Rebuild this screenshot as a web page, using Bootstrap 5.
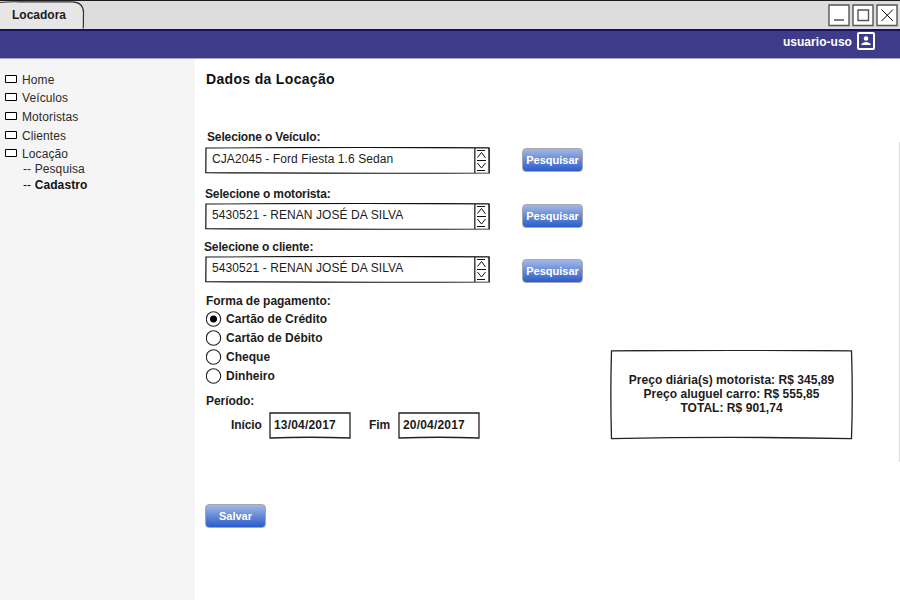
<!DOCTYPE html>
<html lang="pt-BR">
<head>
<meta charset="utf-8">
<meta name="viewport" content="width=device-width, initial-scale=1">
<title>Locadora</title>
<link href="https://cdn.jsdelivr.net/npm/bootstrap@5.3.0/dist/css/bootstrap.min.css" rel="stylesheet">
<style>
body{font-family:"Liberation Sans",Arial,sans-serif;font-size:12px;line-height:18px;color:#1c1c1c;background:#fff;height:600px;overflow:hidden}
svg{display:block;flex:none}
.titlebar{height:29px;background:#ddd;border-top:1px solid #1c1a1c}
.tab-title{width:84px;height:28px;padding:5px 0 0 12px;letter-spacing:0}
.frame{position:absolute;left:0;top:0;z-index:0}
.over{position:relative;z-index:1}
.userbar{height:30px;background:#3e3c88;border-top:2px solid #14125c;border-bottom:1px solid #a9a8cc;padding-right:25px;color:#fff;line-height:22px}
.user-name{margin-right:5px;letter-spacing:.04px}
.side{width:195px;background:#f5f5f5;padding:12px 0 0 5px}
.side a{color:#2b2b2b;text-decoration:none;height:18px;gap:5px;letter-spacing:.1px}
.side a svg{margin-top:-2px}
.side a.last-item{height:17px}
.side .sub-item{height:16px;line-height:16px;padding-left:18px}
.side .current{color:#111}
.gap-1px{margin-top:1px}
.form-col{width:406px;padding:11px 0 0 10px}
.heading{font-size:14px;line-height:18px;margin:0 0 40px 1px;letter-spacing:.33px;color:#111}
.lbl{height:18px;font-weight:700;letter-spacing:-.14px}
.lbl-vehicle{padding-left:2px}
.lbl-driver{margin-top:12px}
.lbl-client{margin:9px 0 0 -1px}
.lbl-pay{margin-top:10px;padding-left:1px;letter-spacing:-.03px}
.lbl-period{margin-top:7px;padding-left:1px;letter-spacing:-.05px}
.pick-row{padding-right:18px}
.pick{width:285px;height:26px;padding:3px 0 0 7px;letter-spacing:.08px}
.blue-btn{width:61px;height:24px;padding:1px 0 0;border:1px solid #a7a7ab;border-radius:4px;background:linear-gradient(#a3b8e6,#2a5cc9);color:#fff;font-size:11px;font-weight:700;line-height:21px}
.client-btn{margin-top:3px;margin-bottom:-1px}
.opts{margin-top:-1px}
.opt{height:19px;gap:4px;font-weight:700;letter-spacing:.03px}
.dates{margin:2px 0 65px 26px;font-weight:700}
.from-lbl{width:38px;letter-spacing:-.1px}
.to-lbl{width:29px;margin-left:18px;letter-spacing:-.1px}
.date{width:82px;height:27px;padding:4px 0 0 5px;letter-spacing:.18px}
.total{width:243px;height:90px;margin:291px 0 0 9px;padding-top:23px;line-height:14px;font-weight:700;text-align:center;letter-spacing:.04px}
.edge{position:absolute;right:0;top:142px}
</style>
</head>
<body class="d-flex flex-column">
<svg width="0" height="0" class="position-absolute">
  <defs>
    <symbol id="pick-frame" viewBox="0 0 285 27">
      <path d="M1 1Q140 .1 284 .8L284.300 26Q140 26.600 .8 25.600Z" fill="#fff" stroke="#111" stroke-width="1.2"/>
      <path d="M269.800 1V26M284.200 1V26" fill="none" stroke="#333" stroke-width="1.4"/>
      <path d="M272 3.500H280M272 13.500H281M272 23.500H280M272.500 10.500L276.500 5.500L280.500 11M272.500 16L276.500 21L280.500 16" fill="none" stroke="#111"/>
    </symbol>
    <symbol id="date-frame" viewBox="0 0 82 27">
      <path d="M1 1H81V26Q40 24.500 1 26Z" fill="#fff" stroke="#222" stroke-width="1.3"/>
    </symbol>
    <symbol id="menu-box" viewBox="0 0 12 8"><path d="M.5.5H11.500V7.500H.5Z" fill="#fff" stroke="#000"/></symbol>
    <symbol id="ring" viewBox="0 0 16 16"><circle cx="7.500" cy="8" r="7.200" fill="#fff" stroke="#222" stroke-width="1.1"/></symbol>
  </defs>
</svg>

<header class="titlebar d-flex justify-content-between">
  <div class="tab-title position-relative fw-bold">
    <svg class="frame" width="86" height="28"><path d="M0 1.500Q8 .5 20 .8H72Q83 1 83.500 11L83.300 27.500H0Z" fill="#e6e6e6"/><path d="M0 1.500Q8 .5 20 .8H72Q83 1 83.500 11L83.300 27.500" fill="none" stroke="#333" stroke-width="1.2"/></svg>
    <span class="over">Locadora</span>
  </div>
  <svg width="72" height="27" fill="#fff" stroke="#555" stroke-width="1.4"><path d="M1 4H21V24.500H1ZM25 4H45V24.500H25ZM49 4H69V24.500H49Z"/><path d="M6 19H16M30 9H40.500V19.500H30Z"/><path d="M53.500 8.500L65 20M65 8.500L53.500 20" stroke="#000" stroke-width="1"/></svg>
</header>

<div class="userbar d-flex justify-content-end fw-bold">
  <span class="user-name">usuario-uso</span>
  <svg width="18" height="20"><rect x="1" y="2" width="16" height="16" rx="1" fill="none" stroke="#fff" stroke-width="2"/><circle cx="9" cy="7.500" r="2.300" fill="#fff"/><path d="M4.500 14V12.700Q9 9.300 13.500 12.700V14Z" fill="#fff"/></svg>
</div>

<div class="d-flex flex-grow-1">
  <nav class="side d-flex flex-column">
    <a href="#" class="d-flex align-items-center"><svg width="12" height="8"><use href="#menu-box"/></svg>Home</a>
    <a href="#" class="d-flex align-items-center"><svg width="12" height="8"><use href="#menu-box"/></svg>Veículos</a>
    <a href="#" class="d-flex align-items-center gap-1px"><svg width="12" height="8"><use href="#menu-box"/></svg>Motoristas</a>
    <a href="#" class="d-flex align-items-center gap-1px"><svg width="12" height="8"><use href="#menu-box"/></svg>Clientes</a>
    <a href="#" class="d-flex align-items-center last-item"><svg width="12" height="8"><use href="#menu-box"/></svg>Locação</a>
    <a href="#" class="sub-item" style="margin-top:-1px">-- Pesquisa</a>
    <a href="#" class="sub-item current">-- <b>Cadastro</b></a>
  </nav>

  <main class="d-flex">
    <form class="form-col">
      <h1 class="heading fw-bold">Dados da Locação</h1>

      <div class="lbl lbl-vehicle">Selecione o Veículo:</div>
      <div class="pick-row d-flex justify-content-between align-items-start gap-1px">
        <div class="pick position-relative"><svg class="frame" width="285" height="27"><use href="#pick-frame"/></svg><span class="over">CJA2045 - Ford Fiesta 1.6 Sedan</span></div>
        <button type="button" class="btn blue-btn gap-1px">Pesquisar</button>
      </div>

      <div class="lbl lbl-driver">Selecione o motorista:</div>
      <div class="pick-row d-flex justify-content-between align-items-start">
        <div class="pick position-relative"><svg class="frame" width="285" height="27"><use href="#pick-frame"/></svg><span class="over">5430521 - RENAN JOSÉ DA SILVA</span></div>
        <button type="button" class="btn blue-btn gap-1px">Pesquisar</button>
      </div>

      <div class="lbl lbl-client">Selecione o cliente:</div>
      <div class="pick-row d-flex justify-content-between align-items-start">
        <div class="pick position-relative"><svg class="frame" width="285" height="27"><use href="#pick-frame"/></svg><span class="over">5430521 - RENAN JOSÉ DA SILVA</span></div>
        <button type="button" class="btn blue-btn client-btn">Pesquisar</button>
      </div>

      <div class="lbl lbl-pay">Forma de pagamento:</div>
      <div class="opts">
        <div class="opt d-flex align-items-center"><svg width="17" height="16" viewBox="-1 0 17 16"><use href="#ring" width="16" height="16"/><circle cx="7.500" cy="8" r="3.500"/></svg>Cartão de Crédito</div>
        <div class="opt d-flex align-items-center"><svg width="17" height="16" viewBox="-1 0 17 16"><use href="#ring" width="16" height="16"/></svg>Cartão de Débito</div>
        <div class="opt d-flex align-items-center"><svg width="17" height="16" viewBox="-1 0 17 16"><use href="#ring" width="16" height="16"/></svg>Cheque</div>
        <div class="opt d-flex align-items-center"><svg width="17" height="16" viewBox="-1 0 17 16"><use href="#ring" width="16" height="16"/></svg>Dinheiro</div>
      </div>

      <div class="lbl lbl-period">Período:</div>
      <div class="dates d-flex">
        <span class="from-lbl pt-1">Início</span>
        <div class="date position-relative"><svg class="frame" width="82" height="27"><use href="#date-frame"/></svg><span class="over">13/04/2017</span></div>
        <span class="to-lbl pt-1">Fim</span>
        <div class="date position-relative"><svg class="frame" width="82" height="27"><use href="#date-frame"/></svg><span class="over">20/04/2017</span></div>
      </div>
      <button type="button" class="btn blue-btn">Salvar</button>
    </form>

    <aside>
      <div class="total position-relative">
        <svg class="frame" width="243" height="90"><path d="M1.500 .8Q120 0 241.500 .8Q243 45 241.500 88.600Q120 86.200 1.500 88.600Q.2 45 1.500 .8Z" fill="#fff" stroke="#222" stroke-width="1.3"/></svg>
        <div class="over">Preço diária(s) motorista: R$ 345,89<br>Preço aluguel carro: R$ 555,85<br>TOTAL: R$ 901,74</div>
      </div>
    </aside>
  </main>
</div>
<svg class="edge" width="1" height="320"><rect width="1" height="320" fill="#ddd"/></svg>
<script src="https://cdn.jsdelivr.net/npm/bootstrap@5.3.0/dist/js/bootstrap.bundle.min.js"></script>
</body>
</html>
